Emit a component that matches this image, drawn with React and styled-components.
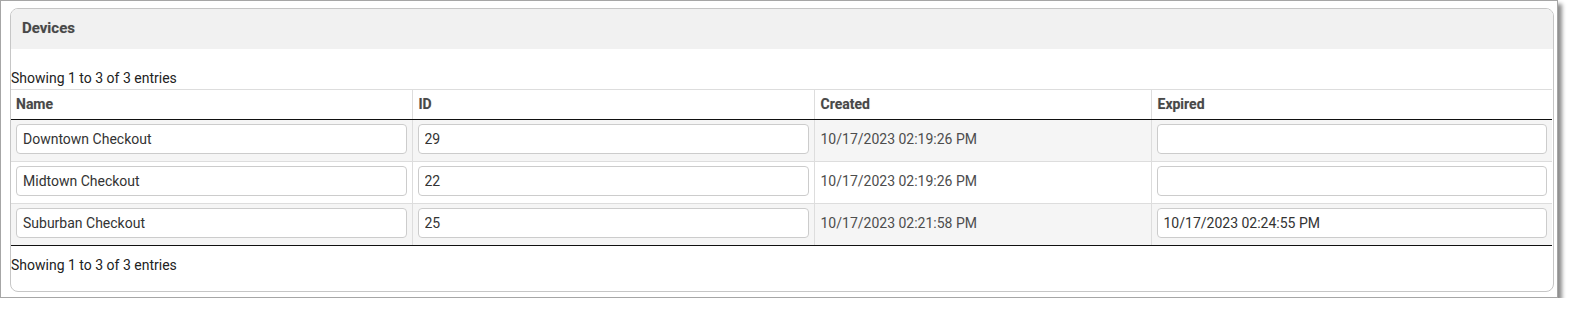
import React from "react";
import styled, { createGlobalStyle } from "styled-components";

const GlobalStyle = createGlobalStyle`
  html, body { margin: 0; padding: 0; background: #ffffff; }
  body { font-family: Roboto, "Liberation Sans", Arial, sans-serif; }
  * { box-sizing: border-box; }
`;

const Frame = styled.div`
  width: 1558px;
  height: 298px;
  border: 1px solid #a6a6a6;
  background: #ffffff;
  box-shadow: 4px 4px 4px rgba(0, 0, 0, 0.45);
  padding: 7px 0 0 9px;
`;

const Panel = styled.section`
  width: 1544px;
  height: 284px;
  border: 1px solid #c6c6c6;
  border-radius: 8px;
  overflow: hidden;
  background: #ffffff;
  display: flex;
  flex-direction: column;
`;

const PanelHeader = styled.header`
  height: 40px;
  background: #f1f1f1;
  display: flex;
  align-items: center;
  padding: 0 0 2px 11px;
  font-size: 15px;
  font-weight: 700;
  color: #484848;
  text-shadow: 0 0 1px rgba(0, 0, 0, 0.2);
`;

const PanelBody = styled.div`
  padding: 19px 0 0 0;
  display: flex;
  flex-direction: column;
`;

const Info = styled.div`
  font-size: 14px;
  line-height: 21px;
  color: #222;
  margin-top: ${(p) => (p.$bottom ? "9px" : "0")};
`;

const Table = styled.table`
  width: 1541px;
  border-collapse: collapse;
  table-layout: fixed;
  font-size: 14px;
`;

const Th = styled.th`
  text-align: left;
  font-weight: 700;
  font-size: 14px;
  color: #484848;
  text-shadow: 0 0 1px rgba(0, 0, 0, 0.2);
  height: 30px;
  padding: 0 6px 1px 6px;
  border-top: 1px solid #dddddd;
  border-bottom: 1px solid #111111;
  border-left: 1px solid #dddddd;
  &:first-child { border-left: none; padding-left: 5px; }
`;

const Tr = styled.tr`
  background: ${(p) => (p.$odd ? "#f5f5f5" : "#ffffff")};
  &:last-child td { border-bottom: 1px solid #111111; }
`;

const Td = styled.td`
  padding: 4px 5px 7px 5px;
  height: 42px;
  border-bottom: 1px solid #dddddd;
  border-left: 1px solid #dddddd;
  vertical-align: top;
  &:first-child { border-left: none; }
`;

const TextCell = styled.div`
  height: 30px;
  display: flex;
  align-items: center;
  padding-left: 1px;
  color: #4d4d4d;
  font-size: 14px;
`;

const Input = styled.input`
  display: block;
  width: 100%;
  height: 30px;
  border: 1px solid #cccccc;
  border-radius: 4px;
  background: #ffffff;
  padding: 0 6px;
  font-family: Roboto, "Liberation Sans", Arial, sans-serif;
  font-size: 14px;
  color: #333333;
  outline: none;
`;

const rows = [
  { name: "Downtown Checkout", id: "29", created: "10/17/2023 02:19:26 PM", expired: "" },
  { name: "Midtown Checkout", id: "22", created: "10/17/2023 02:19:26 PM", expired: "" },
  { name: "Suburban Checkout", id: "25", created: "10/17/2023 02:21:58 PM", expired: "10/17/2023 02:24:55 PM" },
];

export default function App() {
  return (
    <>
      <GlobalStyle />
      <Frame>
        <Panel>
          <PanelHeader>Devices</PanelHeader>
          <PanelBody>
            <Info>Showing 1 to 3 of 3 entries</Info>
            <Table>
              <colgroup>
                <col style={{ width: 401 }} />
                <col style={{ width: 402 }} />
                <col style={{ width: 337 }} />
                <col style={{ width: 401 }} />
              </colgroup>
              <thead>
                <tr>
                  <Th>Name</Th>
                  <Th>ID</Th>
                  <Th>Created</Th>
                  <Th>Expired</Th>
                </tr>
              </thead>
              <tbody>
                {rows.map((r, i) => (
                  <Tr key={r.id} $odd={i % 2 === 0}>
                    <Td><Input defaultValue={r.name} /></Td>
                    <Td><Input defaultValue={r.id} /></Td>
                    <Td><TextCell>{r.created}</TextCell></Td>
                    <Td><Input defaultValue={r.expired} /></Td>
                  </Tr>
                ))}
              </tbody>
            </Table>
            <Info $bottom>Showing 1 to 3 of 3 entries</Info>
          </PanelBody>
        </Panel>
      </Frame>
    </>
  );
}
